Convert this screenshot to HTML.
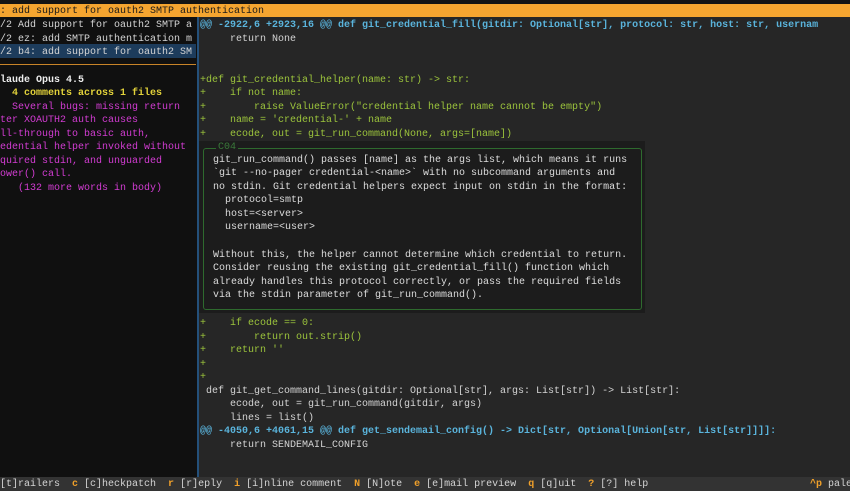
<!DOCTYPE html>
<html><head><meta charset="utf-8"><style>
*{margin:0;padding:0;box-sizing:border-box}
body{width:850px;height:491px;overflow:hidden;background:#262626;font-family:"Liberation Mono","DejaVu Sans Mono",monospace;font-size:10px;color:#d4d4d4;position:relative}
.l{position:absolute;white-space:pre;line-height:13.6px;height:13.6px}
.h{color:#5ab4dc;font-weight:bold}
.g{color:#9cc43c}
.m{color:#d23cd2}
.y{color:#e2d23a;font-weight:bold}
.o{color:#f0a02a;font-weight:bold}
#c{position:absolute;left:0;top:1.5px;width:850px;height:476px}
</style></head><body>
<div style="position:absolute;left:0;top:0;width:850px;height:4px;background:#141414"></div>
<div style="position:absolute;left:0;top:4px;width:850px;height:13px;background:#f5a530"></div>
<div class="l" style="left:0;top:4.5px;color:#1a1a1a">: add support for oauth2 SMTP authentication</div>
<div style="position:absolute;left:0;top:17px;width:197px;height:460px;background:#101010"></div>
<div style="position:absolute;left:197px;top:17px;width:2px;height:460px;background:#24507a"></div>
<div style="position:absolute;left:0;top:44px;width:196px;height:14px;background:#1d3c5c"></div>
<div style="position:absolute;left:0;top:64px;width:196px;height:1px;background:#c88428"></div>
<div id="c">
<div class="l" style="left:0;top:17px">/2 Add support for oauth2 SMTP a</div>
<div class="l" style="left:0;top:31px">/2 ez: add SMTP authentication m</div>
<div class="l" style="left:0;top:44.5px">/2 b4: add support for oauth2 SM</div>
<div class="l" style="left:0;top:72px;font-weight:bold;color:#eee">laude Opus 4.5</div>
<div class="l y" style="left:0;top:85.5px">  4 comments across 1 files</div>
<div class="l m" style="left:0;top:99px">  Several bugs: missing return</div>
<div class="l m" style="left:0;top:112.5px">ter XOAUTH2 auth causes</div>
<div class="l m" style="left:0;top:126px">ll-through to basic auth,</div>
<div class="l m" style="left:0;top:139.5px">edential helper invoked without</div>
<div class="l m" style="left:0;top:153px">quired stdin, and unguarded</div>
<div class="l m" style="left:0;top:166.5px">ower() call.</div>
<div class="l m" style="left:0;top:180px">   (132 more words in body)</div>

<div class="l h" style="left:200px;top:17px">@@ -2922,6 +2923,16 @@ def git_credential_fill(gitdir: Optional[str], protocol: str, host: str, usernam</div>
<div class="l" style="left:200px;top:31px">     return None</div>
<div class="l g" style="left:200px;top:72px">+def git_credential_helper(name: str) -> str:</div>
<div class="l g" style="left:200px;top:85.5px">+    if not name:</div>
<div class="l g" style="left:200px;top:99px">+        raise ValueError("credential helper name cannot be empty")</div>
<div class="l g" style="left:200px;top:112.5px">+    name = 'credential-' + name</div>
<div class="l g" style="left:200px;top:126px">+    ecode, out = git_run_command(None, args=[name])</div>

<div style="position:absolute;left:199px;top:139px;width:446px;height:172px;background:#1c1c1c"></div>
<div style="position:absolute;left:203px;top:146px;width:439px;height:162px;border:1px solid #2e6a2e;border-radius:3px"></div>
<div class="l" style="left:216px;top:139px;color:#3a7a3a;background:#1c1c1c;padding:0 2px">C04</div>
<div class="l" style="left:213px;top:152px;color:#dcdcdc">git_run_command() passes [name] as the args list, which means it runs
`git --no-pager credential-&lt;name&gt;` with no subcommand arguments and
no stdin. Git credential helpers expect input on stdin in the format:
  protocol=smtp
  host=&lt;server&gt;
  username=&lt;user&gt;

Without this, the helper cannot determine which credential to return.
Consider reusing the existing git_credential_fill() function which
already handles this protocol correctly, or pass the required fields
via the stdin parameter of git_run_command().</div>

<div class="l g" style="left:200px;top:315.5px">+    if ecode == 0:</div>
<div class="l g" style="left:200px;top:329px">+        return out.strip()</div>
<div class="l g" style="left:200px;top:342.5px">+    return ''</div>
<div class="l g" style="left:200px;top:356px">+</div>
<div class="l g" style="left:200px;top:369.5px">+</div>
<div class="l" style="left:200px;top:383px"> def git_get_command_lines(gitdir: Optional[str], args: List[str]) -> List[str]:</div>
<div class="l" style="left:200px;top:396.5px">     ecode, out = git_run_command(gitdir, args)</div>
<div class="l" style="left:200px;top:410px">     lines = list()</div>
<div class="l h" style="left:200px;top:423.5px">@@ -4050,6 +4061,15 @@ def get_sendemail_config() -&gt; Dict[str, Optional[Union[str, List[str]]]]:</div>
<div class="l" style="left:200px;top:437px">     return SENDEMAIL_CONFIG</div>
</div>

<div style="position:absolute;left:0;top:477px;width:850px;height:14px;background:#333"></div>
<div class="l" style="left:0;top:477.5px">[t]railers  <span class="o">c</span> [c]heckpatch  <span class="o">r</span> [r]eply  <span class="o">i</span> [i]nline comment  <span class="o">N</span> [N]ote  <span class="o">e</span> [e]mail preview  <span class="o">q</span> [q]uit  <span class="o">?</span> [?] help</div>
<div class="l" style="left:810px;top:477.5px"><span class="o">^p</span> pale</div>
</body></html>
